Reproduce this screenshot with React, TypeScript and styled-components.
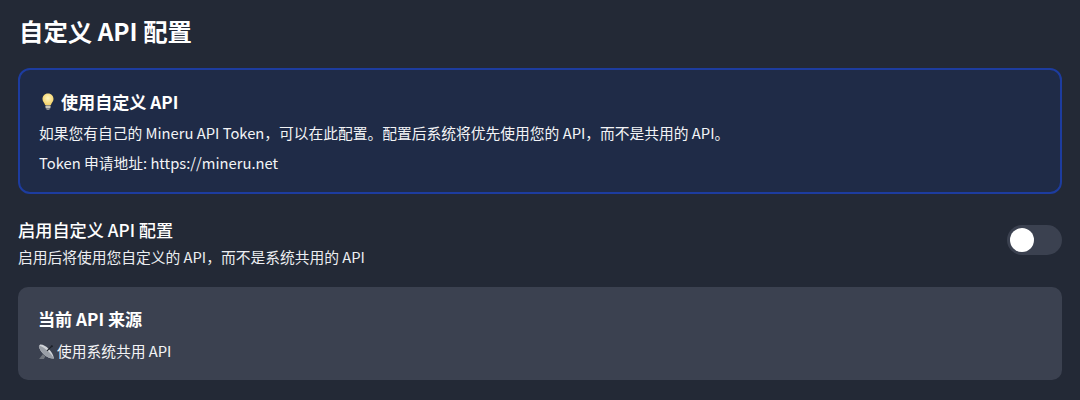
import React from "react";
import styled, { createGlobalStyle } from "styled-components";

const GlobalStyle = createGlobalStyle`
  html, body {
    margin: 0;
    padding: 0;
    background: #232936;
  }
  body {
    font-family: "Noto Sans CJK SC", "Noto Sans", sans-serif;
  }
`;

const BulbIcon = () => (
  <IconSvg viewBox="0 0 16 18" width="16" height="18">
    <defs>
      <radialGradient id="glow" cx="50%" cy="40%" r="60%">
        <stop offset="0%" stopColor="#fff6c0" />
        <stop offset="100%" stopColor="#f3cf62" />
      </radialGradient>
    </defs>
    <path
      d="M8 0.500C4.500 0.500 2.500 3 2.500 6c0 2.500 1.900 3.700 2.700 6.300h5.600C11.600 9.700 13.500 8.500 13.500 6c0-3-2-5.500-5.500-5.500z"
      fill="url(#glow)"
    />
    <rect x="5.500" y="12.500" width="5" height="3" rx="0.800" fill="#c9c6b8" />
    <rect x="6.500" y="15.500" width="3" height="1.500" rx="0.600" fill="#8d8d8d" />
  </IconSvg>
);

const SatelliteIcon = () => (
  <IconSvg viewBox="0 0 16 16" width="17" height="17">
    <path d="M2 1.500C6.500 1 14 8 15 14.500 9 15 2 9 0.800 3z" fill="#d0d3d8" />
    <path d="M1.500 2.500C6 4 12 9 15 14.500 9 15 2 9 0.800 3z" fill="#9a9fa7" />
    <path d="M8.500 7.500L13 3" stroke="#1c2027" strokeWidth="1" />
    <circle cx="13" cy="3" r="1" fill="#1c2027" />
    <path d="M1 15L4.500 10.500 7 12.500 5.500 15z" fill="#70757d" />
  </IconSvg>
);

const App = () => {
  return (
    <Page>
      <GlobalStyle />
      <Title>自定义 API 配置</Title>
      <InfoCard>
        <InfoHeading>
          <BulbIcon />
          使用自定义 API
        </InfoHeading>
        <InfoText>
          如果您有自己的 Mineru API Token，可以在此配置。配置后系统将优先使用您的 API，而不是共用的 API。
        </InfoText>
        <InfoText>Token 申请地址: https://mineru.net</InfoText>
      </InfoCard>
      <ToggleRow>
        <ToggleLabels>
          <ToggleTitle>启用自定义 API 配置</ToggleTitle>
          <ToggleHint>启用后将使用您自定义的 API，而不是系统共用的 API</ToggleHint>
        </ToggleLabels>
        <Track>
          <Knob />
        </Track>
      </ToggleRow>
      <SourceCard>
        <SourceHeading>当前 API 来源</SourceHeading>
        <SourceText>
          <SatelliteIcon />
          使用系统共用 API
        </SourceText>
      </SourceCard>
    </Page>
  );
};

const Page = styled.div`
  width: 1080px;
  height: 400px;
  box-sizing: border-box;
  padding: 13px 18px 0;
  overflow: hidden;
  color: #f3f4f6;
`;

const Title = styled.h2`
  margin: 0 0 20px 1px;
  font-size: 24.4px;
  line-height: 35px;
  font-weight: 700;
  color: #ffffff;
`;

const InfoCard = styled.div`
  box-sizing: border-box;
  height: 126px;
  padding: 19px 19px 0;
  background: #1f2b47;
  border: 2px solid #1d3c9f;
  border-radius: 12px;
`;

const InfoHeading = styled.div`
  display: flex;
  align-items: center;
  gap: 5px;
  margin-bottom: 7px;
  padding-left: 1px;
  font-size: 17.100px;
  line-height: 26px;
  font-weight: 700;
  color: #ffffff;
`;

const InfoText = styled.p`
  margin: 0 0 8px;
  font-size: 14.750px;
  line-height: 22px;
  color: #f3f4f6;
`;

const IconSvg = styled.svg`
  flex: none;
  display: block;
`;

const ToggleRow = styled.div`
  display: flex;
  align-items: center;
  justify-content: space-between;
  margin-top: 23px;
`;

const ToggleLabels = styled.div`
  display: flex;
  flex-direction: column;
  gap: 4px;
`;

const ToggleTitle = styled.div`
  font-size: 17.200px;
  line-height: 26px;
  font-weight: 500;
  color: #ffffff;
`;

const ToggleHint = styled.div`
  font-size: 14.750px;
  line-height: 20px;
  color: #eceef1;
`;

const Track = styled.div`
  display: flex;
  align-items: center;
  box-sizing: border-box;
  width: 55px;
  height: 30px;
  margin-bottom: 5px;
  padding: 0 3px;
  background: #3b4150;
  border-radius: 15px;
`;

const Knob = styled.span`
  display: block;
  width: 24px;
  height: 24px;
  background: #ffffff;
  border-radius: 50%;
`;

const SourceCard = styled.div`
  box-sizing: border-box;
  height: 93px;
  margin-top: 20px;
  padding: 19px 20px 0;
  background: #3b4150;
  border-radius: 10px;
`;

const SourceHeading = styled.div`
  margin-bottom: 8px;
  font-size: 17.100px;
  line-height: 26px;
  font-weight: 700;
  color: #ffffff;
`;

const SourceText = styled.div`
  display: flex;
  align-items: center;
  gap: 2px;
  font-size: 14.750px;
  line-height: 22px;
  color: #f3f4f6;
`;

export default App;
